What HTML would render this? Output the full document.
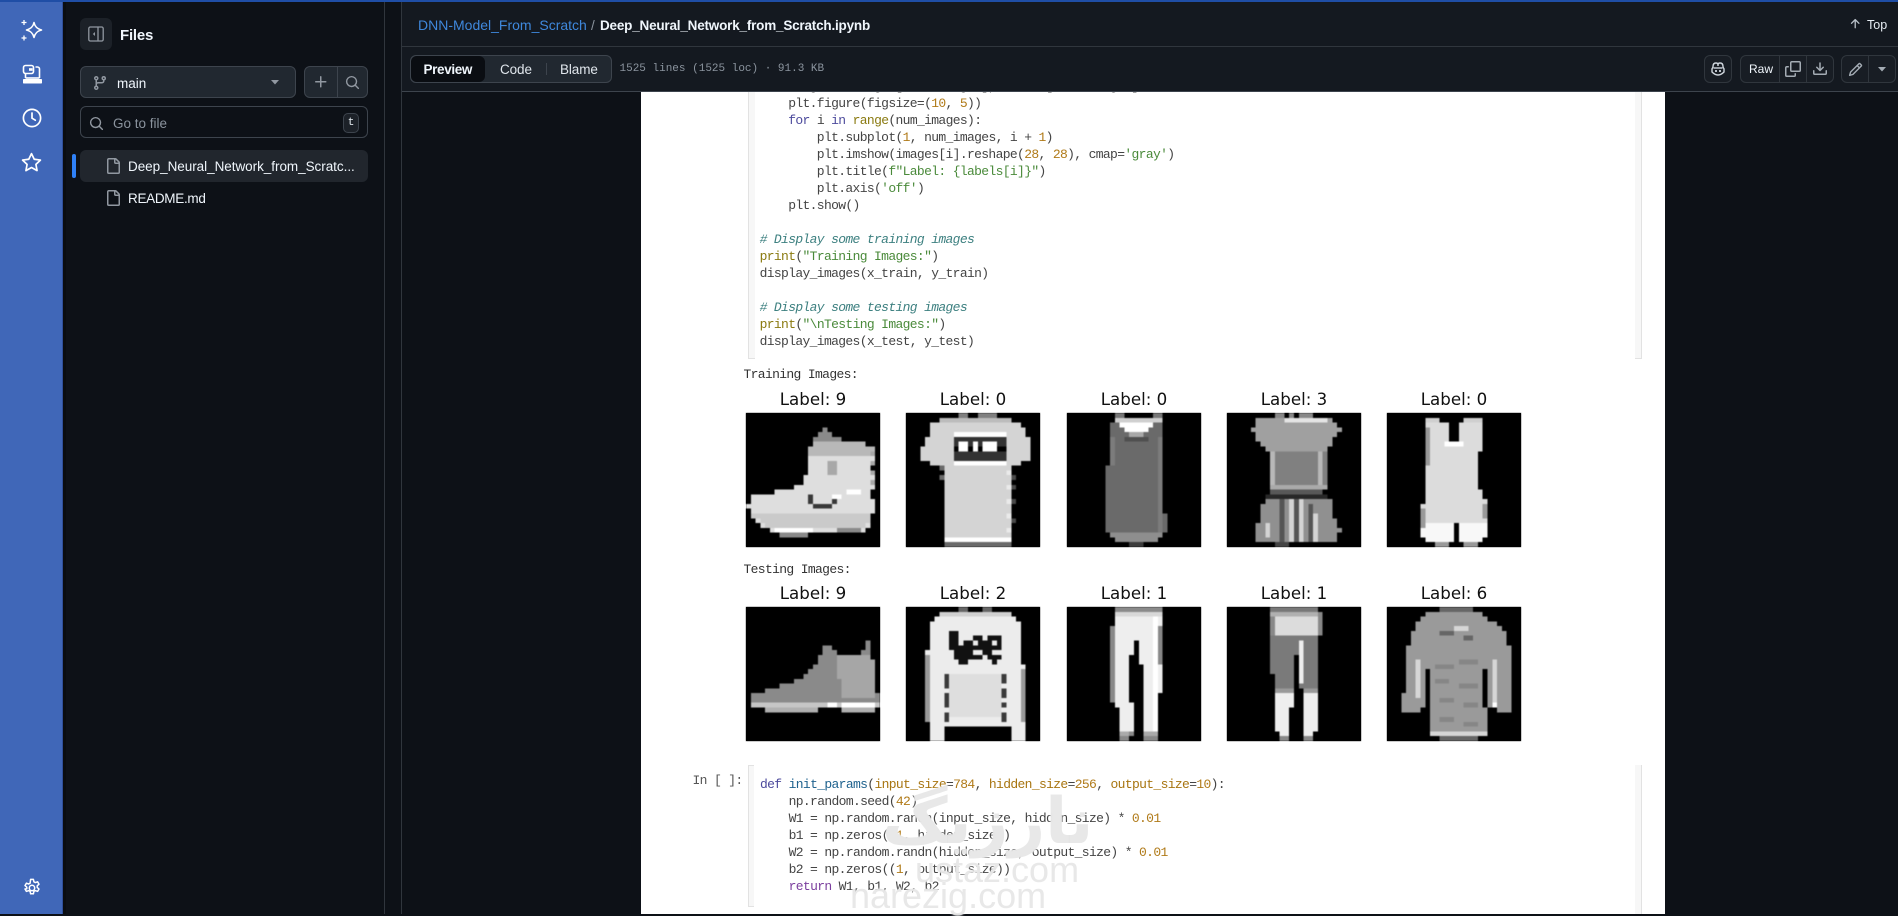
<!DOCTYPE html>
<html lang="en"><head><meta charset="utf-8"><title>Deep_Neural_Network_from_Scratch.ipynb</title>
<style>
*{box-sizing:border-box}
html,body{margin:0;padding:0;width:1898px;height:914px;overflow:hidden;background:#0d1117;font-family:"Liberation Sans",sans-serif;color:#f0f6fc}
.a{position:absolute}
svg{display:block}
.i{fill:currentColor}
.btn{position:absolute;background:#212830;border:1px solid #3d444d;border-radius:6px}
.hb{background:#181d24;border-color:#30363d}
.t{position:absolute;white-space:pre;line-height:17px}
.m{font-family:"Liberation Mono",monospace;font-size:13px;letter-spacing:-.65px;color:#444;white-space:pre;position:absolute;line-height:17px}
.k{color:#4c4a9c}.f{color:#8a7a10}.s{color:#4a8a3a}.n{color:#b07a18}.c{color:#3d8080;font-style:italic}.d{color:#1f628e}.p{color:#a87510}.r{color:#7b3f9e}
.lb{position:absolute;font-family:"DejaVu Sans",sans-serif;font-size:16.67px;color:#111;width:134px;text-align:center;line-height:20px}
svg.g{position:absolute;width:134px;height:134px;background:#000;shape-rendering:crispEdges;filter:blur(.6px)}
svg.g path{fill:none;stroke-width:1}
.imgbox{position:absolute;width:134px;height:134px;background:#000}
.wm{position:absolute;white-space:pre;color:rgba(228,228,228,.85);font-family:"Liberation Sans",sans-serif;text-shadow:0 0 2px #fff}
</style></head><body>

<!-- main dark bg -->
<div class="a" style="left:63px;top:0;width:1835px;height:914px;background:#0d1117"></div>

<!-- notebook paper -->
<div class="a" style="left:641px;top:92px;width:1024px;height:822px;background:#fff"></div>

<!-- code cell 1 -->
<div class="a" style="left:748px;top:92px;width:7px;height:267px;background:#f7f7f7;border-left:1px solid #e2e2e2;border-bottom:1px solid #e2e2e2"></div>
<div class="a" style="left:1635px;top:92px;width:7px;height:267px;background:#f7f7f7;border-right:1px solid #e2e2e2;border-bottom:1px solid #e2e2e2"></div>

<div class="m" style="left:788px;top:78px">images = images[:num_images], labels[:num_images]</div>
<div class="m" style="left:759.6px;top:95px"><pre style="margin:0;font:inherit">    plt.figure(figsize=(<span class="n">10</span>, <span class="n">5</span>))
    <span class="k">for</span> i <span class="k">in</span> <span class="f">range</span>(num_images):
        plt.subplot(<span class="n">1</span>, num_images, i + <span class="n">1</span>)
        plt.imshow(images[i].reshape(<span class="n">28</span>, <span class="n">28</span>), cmap=<span class="s">'gray'</span>)
        plt.title(<span class="s">f"Label: {labels[i]}"</span>)
        plt.axis(<span class="s">'off'</span>)
    plt.show()

<span class="c"># Display some training images</span>
<span class="f">print</span>(<span class="s">"Training Images:"</span>)
display_images(x_train, y_train)

<span class="c"># Display some testing images</span>
<span class="f">print</span>(<span class="s">"\nTesting Images:"</span>)
display_images(x_test, y_test)</pre></div>

<!-- outputs -->
<div class="m" style="left:743.5px;top:366px;color:#333">Training Images:</div>
<div class="m" style="left:743.5px;top:561px;color:#333">Testing Images:</div>

<div class="lb" style="left:746px;top:390px">Label: 9</div>
<div class="lb" style="left:906px;top:390px">Label: 0</div>
<div class="lb" style="left:1067px;top:390px">Label: 0</div>
<div class="lb" style="left:1227px;top:390px">Label: 3</div>
<div class="lb" style="left:1387px;top:390px">Label: 0</div>
<div class="lb" style="left:746px;top:584px">Label: 9</div>
<div class="lb" style="left:906px;top:584px">Label: 2</div>
<div class="lb" style="left:1067px;top:584px">Label: 1</div>
<div class="lb" style="left:1227px;top:584px">Label: 1</div>
<div class="lb" style="left:1387px;top:584px">Label: 6</div>

<!-- black plates keep image edges crisp under the blur -->
<div class="imgbox" style="left:746px;top:413px"></div><div class="imgbox" style="left:906px;top:413px"></div><div class="imgbox" style="left:1067px;top:413px"></div><div class="imgbox" style="left:1227px;top:413px"></div><div class="imgbox" style="left:1387px;top:413px"></div>
<div class="imgbox" style="left:746px;top:607px"></div><div class="imgbox" style="left:906px;top:607px"></div><div class="imgbox" style="left:1067px;top:607px"></div><div class="imgbox" style="left:1227px;top:607px"></div><div class="imgbox" style="left:1387px;top:607px"></div>

<!-- boot -->
<svg class="g" style="left:746px;top:413px" viewBox="0 0 28 28">
<path stroke="#8a8a8a" d="M16 3.5h1M15 4.5h3M14 5.5h6"/>
<path stroke="#b8b8b8" d="M14 6.5h11M13 7.5h14M13 8.5h14"/>
<path stroke="#dedede" d="M13 9.5h14M13 10.5h14M13 11.5h13M13 12.5h14M12 13.5h15M12 14.5h15M10 15.5h17M6 16.5h20M1 17.5h25M1 18.5h26M0 19.5h27M1 20.5h26M1 21.5h25M2 22.5h24M3 23.5h23M5 24.5h20"/>
<path stroke="#a8a8a8" d="M17 10.5h2M17 11.5h2M17 12.5h2M26 8.5h1M26 10.5h1M26 12.5h1M26 14.5h1"/>
<path stroke="#cacaca" d="M1 21.5h25M3 22.5h23M4 23.5h21"/>
<path stroke="#fff" d="M18 17.5h2M6 24.5h8M21 16.5h3"/>
<path stroke="#383838" d="M14 19.5h4M13 18.5h1M18 18.5h1M13 17.5h1"/>
<path stroke="#8a8a8a" d="M7 25.500h6M19 24.500h5"/>
</svg>

<!-- tshirt -->
<svg class="g" style="left:906px;top:413px" viewBox="0 0 28 28">
<path stroke="#808080" d="M11 .5h2M15 .5h4"/>
<path stroke="#bcbcbc" d="M7 1.5h15"/>
<path stroke="#d4d4d4" d="M5 2.5h19M5 3.5h20M5 4.5h20M4 5.5h22M4 6.5h22M3 7.5h23M3 8.5h23M3 9.5h23M5 10.5h19M7 11.5h15M8 12.5h14M8 13.5h14M8 14.5h14M8 15.500h14M8 16.500h14M8 17.500h14M8 18.500h14M8 19.500h14M8 20.500h14M8 21.500h14M8 22.500h14M8 23.500h14M8 24.500h14M8 25.500h14"/>
<path stroke="#fff" d="M10 4.5h11M10 10.5h11M8 26.5h14"/>
<path stroke="#333" d="M10 5.5h11M10 6.5h11M10 8.5h11M10 9.5h11"/>
<path stroke="#000" d="M10 7.5h11"/>
<path stroke="#fff" d="M11 6.5h2M14 6.5h1M16 6.5h3M11 7.5h2M14 7.5h1M16 7.5h3"/>
<path stroke="#6a6a6a" d="M8 27.5h14M7 11.5h1M7 13.5h1"/>
<path stroke="#4a4a4a" d="M22 13.500h1M22 15.500h1M22 18.500h1M22 22.500h1"/>
<path stroke="#eaeaea" d="M21 12.5h1M21 15.500h1M21 18.500h1M21 21.500h1M21 24.500h1"/>
</svg>

<!-- tank -->
<svg class="g" style="left:1067px;top:413px" viewBox="0 0 28 28">
<path stroke="#777" d="M10 .5h2M18 .5h2"/>
<path stroke="#cfcfcf" d="M10 1.5h10"/>
<path stroke="#6a6a6a" d="M9 2.5h11M9 3.5h11M9 4.5h11M9 5.5h11M9 6.5h11M9 7.5h11M9 8.5h11M9 9.5h11M9 10.5h11M8 11.5h12M8 12.5h12M8 13.5h12M8 14.5h12M8 15.5h12M8 16.5h12M8 17.5h12M8 18.5h12M8 19.5h12M8 20.5h12M8 21.5h13M8 22.5h13M8 23.5h13M8 24.5h13"/>
<path stroke="#fff" d="M11 2.5h7M12 3.5h5"/>
<path stroke="#a8a8a8" d="M13 4.5h3"/>
<path stroke="#4f4f4f" d="M12 5.5h5"/>
<path stroke="#8e8e8e" d="M9 25.5h11M10 26.5h9"/>
<path stroke="#3c3c3c" d="M13 27.5h3"/>
<path stroke="#7c7c7c" d="M19.5 5v20M9.5 5v6"/>
</svg>

<!-- dress -->
<svg class="g" style="left:1227px;top:413px" viewBox="0 0 28 28">
<path stroke="#888" d="M10 .5h2M13 .5h1M15 .5h3"/>
<path stroke="#a0a0a0" d="M6 1.5h16M6 2.5h17M5 3.5h19M6 4.5h17M6 5.5h16M7 6.5h15M8 7.5h13"/>
<path stroke="#e4e4e4" d="M12 1.5h9"/>
<path stroke="#808080" d="M9 8.5h12M9 9.5h12M9 10.5h12M9 11.5h12M9 12.5h12M9 13.5h12M9 14.5h12"/>
<path stroke="#b8b8b8" d="M9.5 8v7M19.5 8v7"/>
<path stroke="#aaa" d="M9 15.5h12"/>
<path stroke="#585858" d="M9 16.5h11"/>
<path stroke="#282828" d="M8 17.5h13"/>
<path stroke="#909090" d="M8 18.5h14M7 19.5h15M7 20.5h15M7 21.5h15M7 22.5h16M6 23.5h17M6 24.5h18M6 25.5h17M6 26.5h17"/>
<path stroke="#555" d="M11.5 18v9M14.5 18v9M17.5 19v8"/>
<path stroke="#d4d4d4" d="M13.5 18v9M15.5 18v9M18.5 21v6M8.5 23v3"/>
<path stroke="#444" d="M10 27.5h3"/>
</svg>

<!-- romper -->
<svg class="g" style="left:1387px;top:413px" viewBox="0 0 28 28">
<path stroke="#cfcfcf" d="M8 1.5h3M16 1.5h4"/>
<path stroke="#dcdcdc" d="M8 2.5h5M15 2.5h5M8 3.5h5M15 3.5h5M8 4.5h5M15 4.5h5M8 5.5h5M15 5.5h5M8 6.5h12M8 7.5h12M8 8.5h11M8 9.5h11M8 10.5h11M8 11.5h11M8 12.5h11M8 13.5h11M8 14.5h11M8 15.5h11M8 16.5h12M8 17.5h12M8 18.5h13M7 19.5h14M7 20.5h14M7 21.5h14M7 22.5h14"/>
<path stroke="#fff" d="M12 6.5h4"/>
<path stroke="#f8f8f8" d="M8 23.5h6M15 23.5h6M7 24.5h7M15 24.5h6M7 25.5h7M15 25.5h6M8 26.5h6M15 26.5h5"/>
<path stroke="#999" d="M10 27.5h3M16 27.5h3M8.5 3v8M7.5 20v4M20.5 19v3"/>
</svg>

<!-- sneaker -->
<svg class="g" style="left:746px;top:607px" viewBox="0 0 28 28">
<path stroke="#8a8a8a" d="M25 7.5h1M16 8.5h2M25 8.5h1M16 9.5h3M24 9.5h2M15 10.5h11M15 11.5h12M14 12.5h13M13 13.5h14M12 14.5h15M10 15.5h17M7 16.5h20M4 17.5h23M1 18.5h27M1 19.5h27"/>
<path stroke="#a6a6a6" d="M19 10.5h7M19 11.5h8M19 12.5h8M19 13.5h8M19 14.5h8M20 15.5h7M20 16.5h7M20 17.5h7M20 18.5h7"/>
<path stroke="#c6c6c6" d="M1 20.5h27"/>
<path stroke="#fff" d="M17 20.5h2M20 20.5h7"/>
<path stroke="#b0b0b0" d="M4 21.5h11M20 21.5h7"/>
</svg>

<!-- lee sweater -->
<svg class="g" style="left:906px;top:607px" viewBox="0 0 28 28">
<path stroke="#666" d="M11 .5h2M16 .5h2"/>
<path stroke="#d0d0d0" d="M7 1.5h15"/>
<path stroke="#ececec" d="M6 2.5h17M5 3.5h19M5 4.5h19M5 5.5h19M5 6.5h19M5 7.5h19M5 8.5h19M4 9.5h20M4 10.5h20M4 11.5h20M4 12.5h21M4 13.5h21M4 14.5h21M4 15.5h21M4 16.5h21M4 17.5h21M4 18.5h21M4 19.5h21M4 20.5h21M4 21.5h21M4 22.5h21M4 23.5h21M5 24.5h20M5 25.5h3M22 25.5h3M5 26.5h3M22 26.5h3M5 27.5h3M22 27.5h3"/>
<path stroke="#111" d="M9 5.5h2M9 6.5h2M9 7.5h2M9 8.5h3M10 9.5h2M10 10.5h4M11 11.5h2M14 6.5h2M12 7.5h2M15 7.5h1M12 8.5h4M12 9.5h2M13 10.5h3M17 6.5h3M16 7.5h2M19 7.5h1M16 8.5h4M16 9.5h2M17 10.5h3M18 11.5h1"/>
<path stroke="#dedede" d="M9 14.5h11M9 15.5h11M9 16.5h11M9 17.5h11M9 18.5h11M9 19.5h11M9 20.5h11M9 21.5h11M9 22.5h11"/>
<path stroke="#3a3a3a" d="M8 14.5h1M8 15.5h1M8 16.5h1M8 18.5h1M8 19.5h1M8 20.5h1M8 22.5h1M8 23.5h1M20 14.5h1M20 15.5h1M20 17.5h1M20 18.5h1M20 20.5h1M20 22.5h1M20 23.5h1"/>
<path stroke="#999" d="M4.5 10v14M24.5 13v11"/>
</svg>

<!-- pants -->
<svg class="g" style="left:1067px;top:607px" viewBox="0 0 28 28">
<path stroke="#8a8a8a" d="M10 .5h10"/>
<path stroke="#d8d8d8" d="M10 1.5h10"/>
<path stroke="#eee" d="M10 2.5h10M10 3.5h10M10 4.5h10M10 5.5h10M10 6.5h10M10 7.5h4M15 7.5h5M10 8.5h4M15 8.5h5M10 9.5h4M15 9.5h5M10 10.5h3M15 10.5h5M10 11.5h3M15 11.5h5M10 12.5h3M16 12.5h4M10 13.5h3M16 13.5h4M10 14.5h3M16 14.5h4M10 15.5h3M16 15.5h4M10 16.5h3M16 16.5h4M10 17.5h3M16 17.5h4M10 18.5h3M16 18.5h3M10 19.5h3M16 19.5h3M10 20.5h4M16 20.5h3M11 21.5h3M16 21.5h3M11 22.5h3M16 22.5h3M11 23.5h3M16 23.5h3M11 24.5h3M16 24.5h3M11 25.5h3M16 25.5h3"/>
<path stroke="#fff" d="M18.5 2v24"/>
<path stroke="#888" d="M9.5 4v16M19.5 4v8M13 26.5h1M11 27.5h2M16 27.5h3"/>
<path stroke="#aaa" d="M11 26.5h2M16 26.5h3"/>
</svg>

<!-- thin pants -->
<svg class="g" style="left:1227px;top:607px" viewBox="0 0 28 28">
<path stroke="#787878" d="M9 .5h10"/>
<path stroke="#b0b0b0" d="M9 1.5h10"/>
<path stroke="#dcdcdc" d="M10 2.5h9M10 3.5h9M10 4.5h9M10 5.5h9"/>
<path stroke="#7a7a7a" d="M9 6.5h10M9 7.5h10M9 8.5h10M9 9.5h10M9 10.5h5M15 10.5h4M9 11.5h5M15 11.5h4M9 12.5h5M15 12.5h4M9 13.5h5M15 13.5h4M10 14.5h4M15 14.5h4M10 15.5h4M15 15.5h4M10 16.5h4M15 16.5h4"/>
<path stroke="#eee" d="M15.5 7v9M10 18.5h4M16 18.5h3M10 19.5h4M16 19.5h3M10 20.5h4M16 20.5h3M10 21.5h3M16 21.5h3M10 22.5h3M16 22.5h3M10 23.5h3M16 23.5h3M10 24.5h3M16 24.5h3M10 25.5h3M16 25.5h3M11 26.5h2M16 26.5h2"/>
<path stroke="#999" d="M10 17.5h4M16 17.5h3"/>
<path stroke="#888" d="M11 27.5h2M16 27.5h2M9.5 2v4M19.5 1v5"/>
</svg>

<!-- long sleeve shirt -->
<svg class="g" style="left:1387px;top:607px" viewBox="0 0 28 28">
<path stroke="#666" d="M11 .5h7"/>
<path stroke="#9a9a9a" d="M8 1.5h12M7 2.5h14M6 3.5h17M6 4.5h18M5 5.5h20M5 6.5h20M5 7.5h20M4 8.5h22M4 9.5h22M4 10.5h22M4 11.5h22M4 12.5h22M4 13.5h22M4 14.5h22M4 15.5h22M4 16.5h22M4 17.5h22M3 18.5h23M3 19.5h23M3 20.5h23M3 21.5h4M23 21.5h3M9 21.5h12M9 22.5h12M9 23.5h12M9 24.5h12M9 25.5h12M9 26.5h12"/>
<path stroke="#868686" d="M10 12.5h4M15 11.5h4M10 15.5h3M15 16.5h4M11 19.5h3M16 20.5h3M11 23.5h3M16 24.5h3"/>
<path stroke="#000" d="M8.5 13v8M20.5 13v8"/>
<path stroke="#d6d6d6" d="M14 4.5h3M6.5 11v8M22.5 11v9M9 26.5h12"/>
<path stroke="#fff" d="M22 20.5h1"/>
<path stroke="#666" d="M11 27.5h8M11 5.5h3M16 6.5h2"/>
</svg>

<!-- code cell 2 -->
<div class="a" style="left:748px;top:765px;width:6px;height:142px;background:#f7f7f7;border-left:1px solid #e2e2e2;border-top:1px solid #e2e2e2;border-bottom:1px solid #e2e2e2"></div>
<div class="a" style="left:1635px;top:765px;width:7px;height:149px;background:#f7f7f7;border-right:1px solid #e2e2e2"></div>
<div class="m" style="left:692.5px;top:772px;color:#555">In [ ]:</div>
<div class="m" style="left:760px;top:776px"><pre style="margin:0;font:inherit"><span class="k">def</span> <span class="d">init_params</span>(<span class="p">input_size</span>=<span class="n">784</span>, <span class="p">hidden_size</span>=<span class="n">256</span>, <span class="p">output_size</span>=<span class="n">10</span>):
    np.random.seed(<span class="n">42</span>)
    W1 = np.random.randn(input_size, hidden_size) * <span class="n">0.01</span>
    b1 = np.zeros((<span class="n">1</span>, hidden_size))
    W2 = np.random.randn(hidden_size, output_size) * <span class="n">0.01</span>
    b2 = np.zeros((<span class="n">1</span>, output_size))
    <span class="r">return</span> W1, b1, W2, b2</pre></div>

<!-- watermark -->
<div class="wm" style="left:882px;top:782px;font-family:'DejaVu Sans',sans-serif;font-size:64px;font-weight:bold;line-height:80px">نارزیگ</div>
<div class="wm" style="left:915px;top:850px;font-size:36px;line-height:40px">ustaz.com</div>
<div class="wm" style="left:850px;top:876px;font-size:36px;line-height:40px">narezig.com</div>

<!-- header -->
<div class="a" style="left:401px;top:0;width:1497px;height:92px;background:#141920;border-bottom:1px solid #3d444d"></div>
<div class="a" style="left:401px;top:46px;width:1497px;height:1px;background:#30363d"></div>
<div class="t" style="left:418px;top:16.5px;font-size:14px;color:#3f88dc">DNN-Model_From_Scratch</div>
<div class="t" style="left:591px;top:16.5px;font-size:13.5px;color:#8b949e">/</div>
<div class="t" style="left:600px;top:16.5px;font-size:13.5px;font-weight:bold;color:#f0f6fc;letter-spacing:-.2px">Deep_Neural_Network_from_Scratch.ipynb</div>

<svg class="a i" style="left:1848px;top:17px;color:#b8c0c8" width="14" height="14" viewBox="0 0 16 16"><path d="M3.47 7.78a.75.75 0 0 1 0-1.06l4.25-4.25a.75.75 0 0 1 1.06 0l4.25 4.25a.751.751 0 0 1-.018 1.042.751.751 0 0 1-1.042.018L9 4.81v7.44a.75.75 0 0 1-1.5 0V4.81L4.53 7.78a.75.75 0 0 1-1.06 0Z"/></svg>
<div class="t" style="left:1867px;top:16.5px;font-size:12.5px;color:#e6edf3">Top</div>

<!-- segmented -->
<div class="a" style="left:410px;top:55px;width:201.5px;height:28px;background:#212830;border:1px solid #3d444d;border-radius:6px"></div>
<div class="a" style="left:411px;top:56px;width:74px;height:26px;background:#0a0d12;border-radius:6px"></div>
<div class="a" style="left:546px;top:63px;width:1px;height:12px;background:#3d444d"></div>
<div class="t" style="left:423.5px;top:61px;font-size:13.5px;font-weight:bold;color:#f0f6fc;letter-spacing:-.35px">Preview</div>
<div class="t" style="left:500px;top:61px;font-size:13.5px;color:#e0e6ec;letter-spacing:-.1px">Code</div>
<div class="t" style="left:560px;top:61px;font-size:13.5px;color:#e0e6ec;letter-spacing:-.1px">Blame</div>
<div class="t" style="left:619.5px;top:61px;font-family:'Liberation Mono',monospace;font-size:11px;color:#8b949e">1525 lines (1525 loc) · 91.3 KB</div>

<!-- right tools -->
<div class="btn hb" style="left:1704px;top:55px;width:28px;height:28px"></div>
<svg class="a" style="left:1710px;top:61px" width="16" height="16" viewBox="0 0 16 16" fill="none" stroke="#d0d7de" stroke-width="1.4"><path d="M3 5.5C3 3 4 2 6 2s2 1 2 3c0-2 0-3 2-3s3 1 3 3.500c0 1 .3 1.200 1 2.300V11c-2 2-4 3-6 3s-4-1-6-3V7.800c.7-1.100 1-1.300 1-2.300Z"/><path d="M3.500 7h9"/><path d="M6 9v2M10 9v2" stroke-width="1.800"/></svg>

<div class="btn hb" style="left:1740px;top:55px;width:94px;height:28px"></div>
<div class="a" style="left:1779px;top:56px;width:1px;height:26px;background:#30363d"></div>
<div class="a" style="left:1806px;top:56px;width:1px;height:26px;background:#30363d"></div>
<div class="t" style="left:1749px;top:61px;font-size:12px;color:#f0f6fc">Raw</div>
<svg class="a i" style="left:1785px;top:61px;color:#a4acb4" width="16" height="16" viewBox="0 0 16 16"><path d="M0 6.75C0 5.784.784 5 1.75 5h1.5a.75.75 0 0 1 0 1.5h-1.5a.25.25 0 0 0-.25.25v7.5c0 .138.112.25.25.25h7.5a.25.25 0 0 0 .25-.25v-1.5a.75.75 0 0 1 1.5 0v1.5A1.75 1.75 0 0 1 9.25 16h-7.5A1.75 1.75 0 0 1 0 14.25Z"/><path d="M5 1.75C5 .784 5.784 0 6.75 0h7.5C15.216 0 16 .784 16 1.75v7.5A1.75 1.75 0 0 1 14.25 11h-7.5A1.75 1.75 0 0 1 5 9.25Zm1.75-.25a.25.25 0 0 0-.25.25v7.5c0 .138.112.25.25.25h7.5a.25.25 0 0 0 .25-.25v-7.5a.25.25 0 0 0-.25-.25Z"/></svg>
<svg class="a i" style="left:1812px;top:61px;color:#a4acb4" width="16" height="16" viewBox="0 0 16 16"><path d="M2.75 14A1.75 1.75 0 0 1 1 12.25v-2.5a.75.75 0 0 1 1.5 0v2.5c0 .138.112.25.25.25h10.5a.25.25 0 0 0 .25-.25v-2.5a.75.75 0 0 1 1.5 0v2.5A1.75 1.75 0 0 1 13.25 14Z"/><path d="M7.25 7.689V2a.75.75 0 0 1 1.5 0v5.689l1.97-1.969a.749.749 0 1 1 1.06 1.06l-3.25 3.25a.749.749 0 0 1-1.06 0L4.22 6.78a.749.749 0 1 1 1.06-1.06l1.97 1.969Z"/></svg>

<div class="btn hb" style="left:1841px;top:55px;width:55px;height:28px"></div>
<div class="a" style="left:1868px;top:56px;width:1px;height:26px;background:#30363d"></div>
<svg class="a i" style="left:1848px;top:62px;color:#a4acb4" width="15" height="15" viewBox="0 0 16 16"><path d="M11.013 1.427a1.75 1.75 0 0 1 2.474 0l1.086 1.086a1.75 1.75 0 0 1 0 2.474l-8.61 8.61c-.21.21-.47.364-.756.445l-3.251.93a.75.75 0 0 1-.927-.928l.929-3.25c.081-.286.235-.547.445-.758l8.61-8.61Zm.176 4.823L9.75 4.81l-6.286 6.287a.253.253 0 0 0-.064.108l-.558 1.953 1.953-.558a.253.253 0 0 0 .108-.064Zm1.238-3.763a.25.25 0 0 0-.354 0L10.811 3.75l1.439 1.44 1.263-1.263a.25.25 0 0 0 0-.354Z"/></svg>
<svg class="a i" style="left:1877px;top:67px;color:#a4acb4" width="10" height="5" viewBox="0 0 10 5"><path d="M1 0h8L5 4.500Z"/></svg>

<!-- file tree panel -->
<div class="a" style="left:63px;top:0;width:321px;height:914px;background:#0d1117"></div>
<div class="a" style="left:384px;top:0;width:1px;height:914px;background:#30363d"></div>
<div class="a" style="left:401px;top:0;width:1px;height:914px;background:#30363d"></div>
<div class="a" style="left:63px;top:2px;width:3px;height:912px;background:#0a0d11"></div>

<div class="a" style="left:80px;top:18px;width:32px;height:32px;background:#1c2128;border-radius:6px"></div>
<svg class="a" style="left:88px;top:26px" width="16" height="16" viewBox="0 0 16 16" fill="none" stroke="#9198a1" stroke-width="1.3"><rect x=".8" y="1" width="14.4" height="14" rx="1.5"/><path d="M10 1v14"/><path d="M7 6 4.800 8 7 10Z" fill="#9198a1" stroke="none"/></svg>
<div class="t" style="left:120px;top:27px;font-size:15px;font-weight:bold;color:#f0f6fc;letter-spacing:-.2px">Files</div>

<div class="btn" style="left:80px;top:66px;width:216px;height:32px;background:#212830"></div>
<svg class="a i" style="left:92px;top:75px;color:#9198a1" width="16" height="16" viewBox="0 0 16 16"><path d="M9.5 3.25a2.25 2.25 0 1 1 3 2.122V6A2.5 2.5 0 0 1 10 8.5H6a1 1 0 0 0-1 1v1.128a2.251 2.251 0 1 1-1.5 0V5.372a2.25 2.25 0 1 1 1.5 0v1.836A2.493 2.493 0 0 1 6 7h4a1 1 0 0 0 1-1v-.628A2.25 2.25 0 0 1 9.5 3.25Zm-6 0a.75.75 0 1 0 1.5 0 .75.75 0 0 0-1.5 0Zm8.25-.75a.75.75 0 1 0 0 1.5.75.75 0 0 0 0-1.5ZM4.25 12a.75.75 0 1 0 0 1.5.75.75 0 0 0 0-1.5Z"/></svg>
<div class="t" style="left:117px;top:75px;font-size:13.5px;color:#f0f6fc">main</div>
<svg class="a i" style="left:270px;top:80px;color:#9198a1" width="10" height="5" viewBox="0 0 10 5"><path d="M1 0h8L5 4.500Z"/></svg>

<div class="btn" style="left:304px;top:66px;width:64px;height:32px"></div>
<div class="a" style="left:336.5px;top:67px;width:1px;height:30px;background:#3d444d"></div>
<svg class="a i" style="left:313px;top:74px;color:#9198a1" width="16" height="16" viewBox="0 0 16 16"><path d="M7.75 2a.75.75 0 0 1 .75.75V7h4.25a.75.75 0 0 1 0 1.5H8.5v4.25a.75.75 0 0 1-1.5 0V8.5H2.75a.75.75 0 0 1 0-1.5H7V2.75A.75.75 0 0 1 7.75 2Z"/></svg>
<svg class="a i" style="left:345px;top:75px;color:#9198a1" width="15" height="15" viewBox="0 0 16 16"><path d="M10.68 11.74a6 6 0 0 1-7.922-8.982 6 6 0 0 1 8.982 7.922l3.04 3.04a.749.749 0 0 1-.326 1.275.749.749 0 0 1-.734-.215ZM11.5 7a4.499 4.499 0 1 0-8.997 0A4.499 4.499 0 0 0 11.5 7Z"/></svg>

<div class="a" style="left:80px;top:106px;width:288px;height:32px;background:#0d1117;border:1px solid #3d444d;border-radius:6px"></div>
<svg class="a i" style="left:89px;top:116px;color:#9198a1" width="15" height="15" viewBox="0 0 16 16"><path d="M10.68 11.74a6 6 0 0 1-7.922-8.982 6 6 0 0 1 8.982 7.922l3.04 3.04a.749.749 0 0 1-.326 1.275.749.749 0 0 1-.734-.215ZM11.5 7a4.499 4.499 0 1 0-8.997 0A4.499 4.499 0 0 0 11.5 7Z"/></svg>
<div class="t" style="left:113px;top:115px;font-size:13.5px;color:#8b949e">Go to file</div>
<div class="a" style="left:343px;top:113px;width:16px;height:20px;background:#1c2128;border:1px solid #3d444d;border-radius:5px;font:11px/18px 'Liberation Mono',monospace;color:#e6edf3;text-align:center">t</div>

<div class="a" style="left:80px;top:150px;width:288px;height:32px;background:#21262d;border-radius:6px"></div>
<div class="a" style="left:72px;top:154px;width:4px;height:24px;background:#2f81f7;border-radius:2px"></div>
<svg class="a i" style="left:105px;top:158px;color:#9198a1" width="16" height="16" viewBox="0 0 16 16"><path d="M2 1.75C2 .784 2.784 0 3.75 0h6.586c.464 0 .909.184 1.237.513l2.914 2.914c.329.328.513.773.513 1.237v9.586A1.75 1.75 0 0 1 13.25 16h-9.5A1.75 1.75 0 0 1 2 14.25Zm1.75-.25a.25.25 0 0 0-.25.25v12.5c0 .138.112.25.25.25h9.5a.25.25 0 0 0 .25-.25V6h-2.75A1.75 1.75 0 0 1 9 4.25V1.5Zm6.75.062V4.25c0 .138.112.25.25.25h2.688l-.011-.013-2.914-2.914-.013-.011Z"/></svg>
<div class="t" style="left:128px;top:158px;font-size:13.5px;color:#f0f6fc;letter-spacing:-.04px">Deep_Neural_Network_from_Scratc...</div>
<svg class="a i" style="left:105px;top:190px;color:#9198a1" width="16" height="16" viewBox="0 0 16 16"><path d="M2 1.75C2 .784 2.784 0 3.75 0h6.586c.464 0 .909.184 1.237.513l2.914 2.914c.329.328.513.773.513 1.237v9.586A1.75 1.75 0 0 1 13.25 16h-9.5A1.75 1.75 0 0 1 2 14.25Zm1.75-.25a.25.25 0 0 0-.25.25v12.5c0 .138.112.25.25.25h9.5a.25.25 0 0 0 .25-.25V6h-2.75A1.75 1.75 0 0 1 9 4.25V1.5Zm6.75.062V4.25c0 .138.112.25.25.25h2.688l-.011-.013-2.914-2.914-.013-.011Z"/></svg>
<div class="t" style="left:128px;top:190px;font-size:13.5px;color:#f0f6fc;letter-spacing:-.3px">README.md</div>

<!-- blue rail -->
<div class="a" style="left:0;top:0;width:63px;height:914px;background:#4067b8"></div>
<div class="a" style="left:62px;top:0;width:1px;height:914px;background:#2f4f9a"></div>
<div class="a" style="left:0;top:0;width:1898px;height:2px;background:#1f4ea6"></div>

<svg class="a" style="left:20px;top:18px" width="26" height="26" viewBox="0 0 26 26" fill="none" stroke="#fff" stroke-width="1.6" stroke-linejoin="round"><path d="M14 4.500c.9 4.200 3 6.300 7.500 7.500-4.500 1.200-6.600 3.300-7.500 7.500-.9-4.200-3-6.300-7.500-7.500 4.500-1.200 6.600-3.300 7.500-7.500Z"/><path d="M4 2v5M1.500 4.500h5M4 17.500v5M1.500 20h5" stroke-width="1.300"/></svg>
<svg class="a" style="left:22px;top:64px" width="21" height="21" viewBox="0 0 21 21" fill="none" stroke="#fff" stroke-width="1.6" stroke-linejoin="round"><rect x="1.500" y="1.500" width="10" height="8" rx="2"/><path d="M7 5.500h3.500" stroke-width="2.600"/><path d="M13.500 3h2a2 2 0 0 1 2 2v9M3.500 10v4"/><rect x="1" y="15" width="19" height="4.500" rx=".8" fill="#fff" stroke="none"/><path d="M3.500 14h14"/></svg>
<svg class="a" style="left:22px;top:108px" width="20" height="20" viewBox="0 0 20 20" fill="none" stroke="#fff" stroke-width="1.7" stroke-linecap="round" stroke-linejoin="round"><circle cx="10" cy="10" r="8.600"/><path d="M10 5v5.200l3.300 2"/></svg>
<svg class="a" style="left:21px;top:152px" width="21" height="21" viewBox="0 0 20 20" fill="none" stroke="#fff" stroke-width="1.6" stroke-linejoin="round"><path d="M10 1.500l2.600 5.400 5.900.8-4.300 4.100 1.100 5.900L10 14.800l-5.300 2.900 1.100-5.900L1.500 7.700l5.900-.8Z"/></svg>
<svg class="a" style="left:22px;top:878px" width="20" height="20" viewBox="0 0 20 20" fill="none" stroke="#fff" stroke-width="1.5" stroke-linejoin="round"><path d="M8.600 1h2.800l.5 2.400 1.400.8 2.300-.8 1.400 2.400-1.800 1.600v1.600l1.800 1.600-1.400 2.400-2.300-.8-1.400.8-.5 2.400H8.600l-.5-2.400-1.400-.8-2.300.8-1.400-2.400L4.800 10.400V8.800L3 7.200l1.400-2.400 2.300.8 1.400-.8Z" transform="translate(0 .4)"/><circle cx="10" cy="10" r="2.700"/></svg>

</body></html>
